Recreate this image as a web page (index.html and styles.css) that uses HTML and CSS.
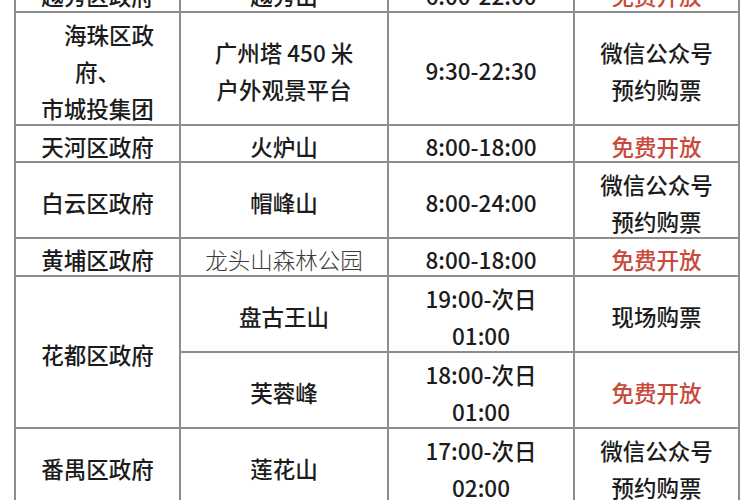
FILE: index.html
```html
<!DOCTYPE html>
<html lang="zh-CN">
<head>
<meta charset="utf-8">
<title>广州观景点开放时间</title>
<link rel="stylesheet" href="styles.css">
</head>
<body>
<table class="sched">
  <colgroup>
    <col class="w1"><col class="w2"><col class="w3"><col class="w4">
  </colgroup>
  <tbody>
    <tr class="r1">
      <td><span class="t">越秀区政府</span></td>
      <td><span class="t">越秀山</span></td>
      <td><span class="t">6:00-22:00</span></td>
      <td><span class="t red">免费开放</span></td>
    </tr>
    <tr class="r3">
      <td><span class="t"><span class="ln indent">海珠区政</span><span class="ln">府、</span><span class="ln">市城投集团</span></span></td>
      <td><span class="t"><span class="ln">广州塔 450 米</span><span class="ln">户外观景平台</span></span></td>
      <td><span class="t">9:30-22:30</span></td>
      <td><span class="t"><span class="ln">微信公众号</span><span class="ln">预约购票</span></span></td>
    </tr>
    <tr class="r1">
      <td><span class="t">天河区政府</span></td>
      <td><span class="t">火炉山</span></td>
      <td><span class="t">8:00-18:00</span></td>
      <td><span class="t red">免费开放</span></td>
    </tr>
    <tr class="r2">
      <td><span class="t">白云区政府</span></td>
      <td><span class="t">帽峰山</span></td>
      <td><span class="t">8:00-24:00</span></td>
      <td><span class="t"><span class="ln">微信公众号</span><span class="ln">预约购票</span></span></td>
    </tr>
    <tr class="r1">
      <td><span class="t">黄埔区政府</span></td>
      <td><span class="t thin">龙头山森林公园</span></td>
      <td><span class="t">8:00-18:00</span></td>
      <td><span class="t red">免费开放</span></td>
    </tr>
    <tr class="r2">
      <td rowspan="2"><span class="t">花都区政府</span></td>
      <td><span class="t">盘古王山</span></td>
      <td><span class="t"><span class="ln">19:00-次日</span><span class="ln">01:00</span></span></td>
      <td><span class="t">现场购票</span></td>
    </tr>
    <tr class="r2b">
      <td><span class="t">芙蓉峰</span></td>
      <td><span class="t"><span class="ln">18:00-次日</span><span class="ln">01:00</span></span></td>
      <td><span class="t red">免费开放</span></td>
    </tr>
    <tr class="r2">
      <td><span class="t">番禺区政府</span></td>
      <td><span class="t">莲花山</span></td>
      <td><span class="t"><span class="ln">17:00-次日</span><span class="ln">02:00</span></span></td>
      <td><span class="t"><span class="ln">微信公众号</span><span class="ln">预约购票</span></span></td>
    </tr>
  </tbody>
</table>
</body>
</html>
```

FILE: styles.css
```css
html, body {
  margin: 0;
  padding: 0;
  background: #ffffff;
  overflow: hidden;
}

body {
  width: 750px;
  height: 500px;
  font-family: "Noto Sans CJK SC", "Noto Sans", sans-serif;
  color: #1c1c1c;
}

.sched {
  border-collapse: collapse;
  table-layout: fixed;
  width: 724px;
  margin: -27px 0 0 14px;
  font-size: 22.5px;
  font-weight: 500;
}

.w1 { width: 165px; }
.w2 { width: 208px; }
.w3 { width: 186px; }
.w4 { width: 165px; }

.sched td {
  border: 2px solid #8d8d8d;
  padding: 0;
  text-align: center;
  vertical-align: middle;
  white-space: nowrap;
}

.r1 { height: 37.5px; }
.r2 { height: 76px; }
.r2b { height: 75px; }
.r3 { height: 113px; }

.t {
  display: block;
  line-height: 35.5px;
  transform: translateY(3px);
}

.ln {
  display: block;
  line-height: 37px;
}

.indent {
  padding-left: 23px;
}

.red {
  color: #c94a3c;
}

.thin {
  font-weight: 300;
  color: #3a3a3a;
}
```
